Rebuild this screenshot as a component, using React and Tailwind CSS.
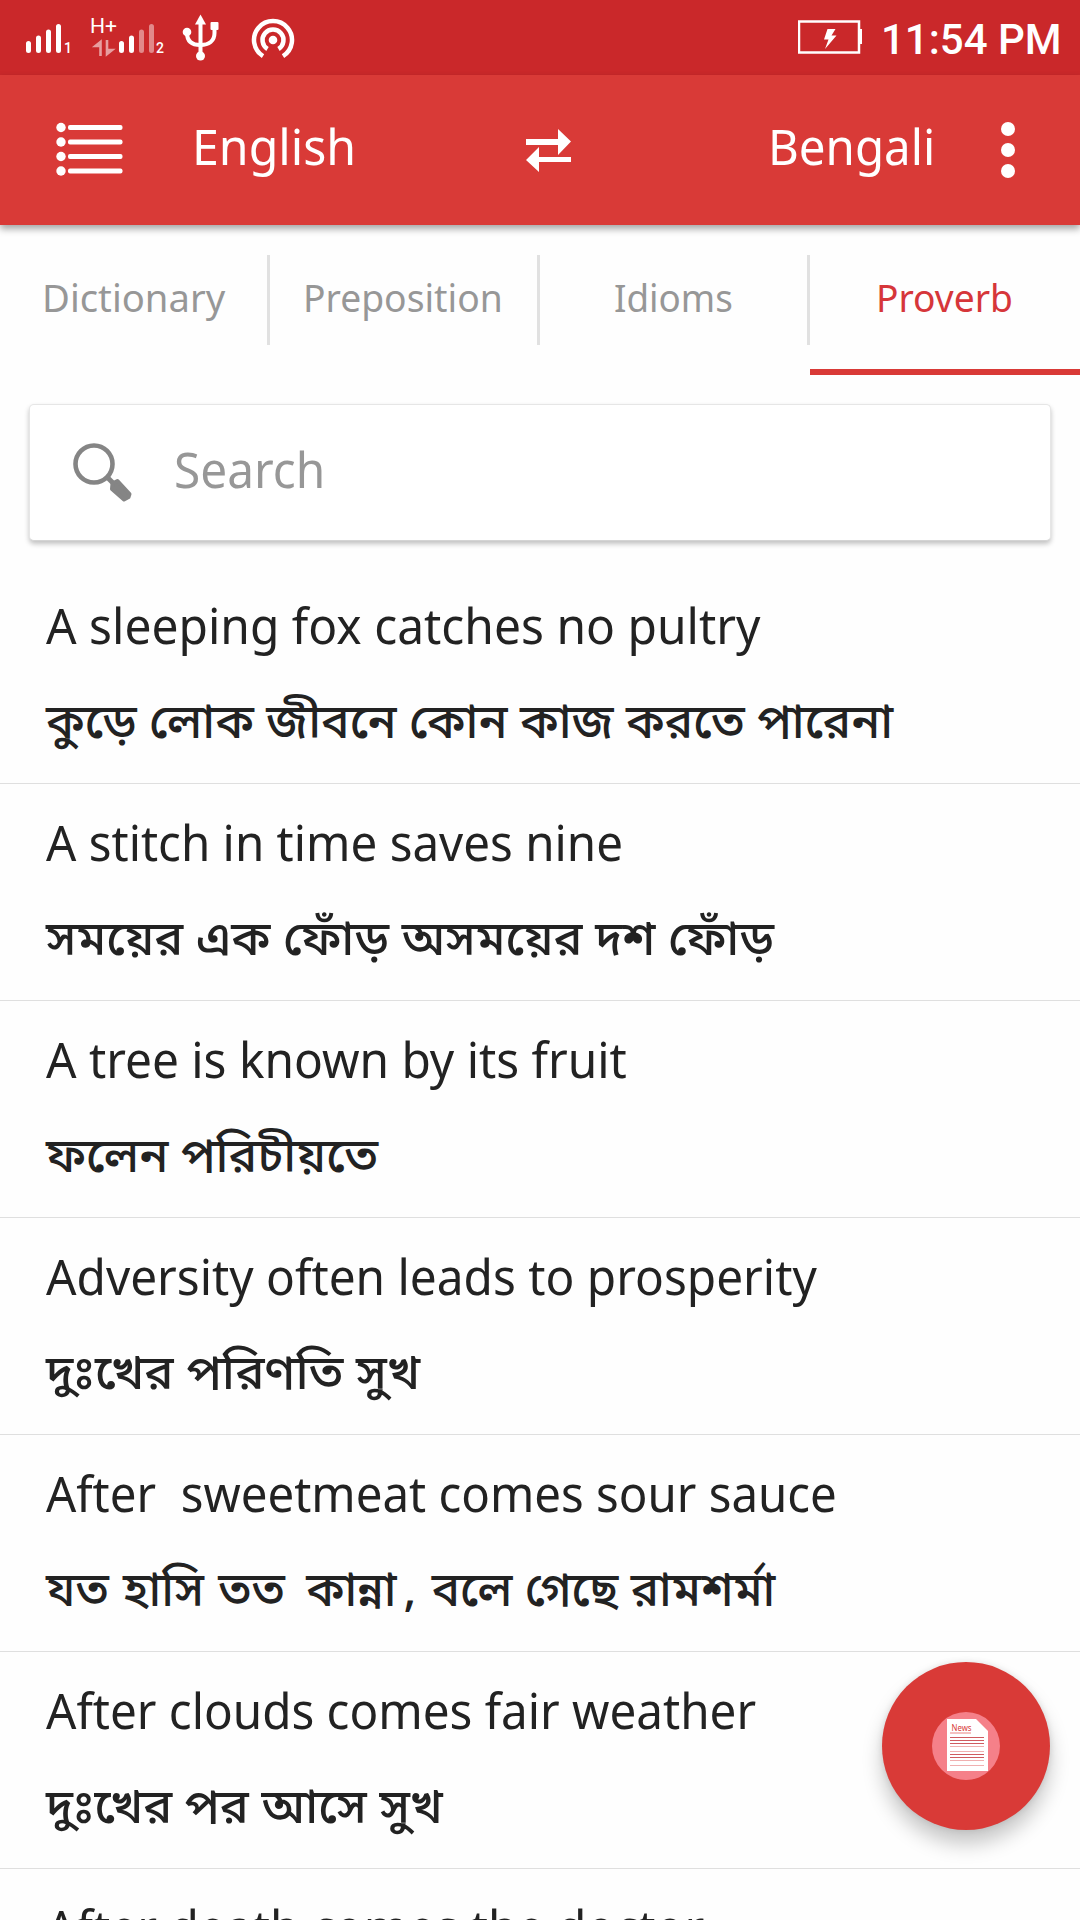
import { useLayoutEffect, useRef, useState } from "react";

// Single line of text condensed or widened to occupy an exact width.
function FitText({ width, className = "", children }) {
  const ref = useRef(null);
  const [scale, setScale] = useState(1);
  useLayoutEffect(() => {
    const fit = () => {
      if (ref.current && ref.current.offsetWidth) setScale(width / ref.current.offsetWidth);
    };
    fit();
    document.fonts?.ready.then(fit);
  }, [width]);
  return (
    <div className={`whitespace-pre ${className}`} style={{ width }}>
      <span ref={ref} className="inline-block origin-left" style={{ transform: `scaleX(${scale})` }}>
        {children}
      </span>
    </div>
  );
}

const proverbs = [
  { en: "A sleeping fox catches no pultry", enW: 714, bn: "কুড়ে লোক জীবনে কোন কাজ করতে পারেনা", bnW: 847 },
  { en: "A stitch in time saves nine", enW: 577, bn: "সময়ের এক ফোঁড় অসময়ের দশ ফোঁড়", bnW: 728 },
  { en: "A tree is known by its fruit", enW: 581, bn: "ফলেন পরিচীয়তে", bnW: 332 },
  { en: "Adversity often leads to prosperity", enW: 771, bn: "দুঃখের পরিণতি সুখ", bnW: 374 },
  {
    en: "After  sweetmeat comes sour sauce",
    enW: 791,
    bn: (
      <>
        যত <span className="ml-[2px]">হাসি</span> <span className="ml-[2px]">তত</span>{" "}
        <span className="ml-[9px]">কান্না</span>
        <span className="mr-[3px] ml-[7px]">,</span> বলে গেছে রামশর্মা
      </>
    ),
    bnW: 729,
  },
  { en: "After clouds comes fair weather", enW: 710, bn: "দুঃখের পর আসে সুখ", bnW: 397 },
  { en: "After death comes the doctor", enW: 658, bn: "", bnW: 0 },
];

const tabs = [
  { label: "Dictionary", w: 183, pad: "pl-[42px]" },
  { label: "Preposition", w: 200, pad: "pl-[33px]" },
  { label: "Idioms", w: 119, pad: "pl-[74px]" },
  { label: "Proverb", w: 137, pad: "pl-[66px]", active: true },
];

function StatusBar() {
  return (
    <div className="flex h-[75px] items-center justify-between bg-[#ca282a] text-white">
      <svg width="320" height="75" viewBox="0 0 320 75" fill="none" stroke="white">
        <g strokeWidth="5" strokeLinecap="round">
          <path d="M28.5 43.500v7M38.500 38v12.500M48.500 32v18.500M58.500 26.500v24" />
          <path d="M121.500 43.500v7M131.500 38v12.500" />
          <path d="M141.500 32v18.500M151.500 26.500v24" strokeOpacity=".45" />
        </g>
        <text x="64" y="53" fontSize="14" fontFamily="Roboto" fontWeight="500" fill="white" stroke="none">1</text>
        <text x="156" y="53" fontSize="14" fontFamily="Roboto" fontWeight="500" fill="white" stroke="none">2</text>
        <text x="90" y="33" fontSize="20" fontFamily="Roboto" textLength="27" lengthAdjust="spacingAndGlyphs" fill="white" stroke="none">H+</text>
        <path d="M100.500 56V42l-5 4h5M107 40v14l5-4h-5" strokeWidth="2.600" strokeOpacity=".55" />
        <g strokeWidth="4">
          <path d="M200.500 20v35" />
          <path d="M187 33c0 8 5 12 13.500 12S214.500 41 214.500 33V26" />
        </g>
        <g fill="white" stroke="none">
          <path d="M200.500 14.500l5.500 10h-11z" />
          <circle cx="187" cy="32" r="4.300" />
          <rect x="210.500" y="22" width="8" height="8" rx="1" />
          <circle cx="200.500" cy="56" r="4.500" />
          <circle cx="273" cy="40" r="4.300" />
        </g>
        <path d="M263 56.200A19 19 0 1 1 283 56.200" strokeWidth="4.500" />
        <path d="M267.500 49A10.500 10.500 0 1 1 278.500 49" strokeWidth="4.500" />
      </svg>
      <div className="flex items-center pr-[18px]">
        <svg className="mr-[18px]" width="65" height="35" viewBox="0 0 65 35" fill="white">
          <rect x="1" y="1.500" width="60" height="31" fill="none" stroke="white" strokeWidth="2.500" />
          <path d="M61 9h3v15h-3z" />
          <path d="M29.500 9h8l-4 6.500h5L27 29l3.500-9.500H26z" />
        </svg>
        <FitText width={181} className="pt-[4px] font-['Roboto'] text-[42px] leading-[60px] font-medium">
          11:54 PM
        </FitText>
      </div>
    </div>
  );
}

function AppBar() {
  return (
    <header className="relative z-10 flex h-[150px] items-center bg-[#d93a37] text-white shadow-[0_4px_7px_rgba(0,0,0,0.35)]">
      <svg className="ml-[56px]" width="68" height="56" viewBox="0 0 68 56" fill="white">
        {[5.5, 20, 34.5, 49].map((y) => (
          <g key={y}>
            <circle cx="5" cy={y} r="4.700" />
            <rect x="12" y={y - 2.5} width="54.500" height="5" rx="2" />
          </g>
        ))}
      </svg>
      <FitText width={164} className="-mt-[8px] ml-[68px] text-[50px] leading-[60px]">English</FitText>
      <svg className="ml-[170px]" width="46" height="43" viewBox="0 0 46 43" fill="white">
        <path d="M0 10h32V0l13 12.500L32 26V16H0zM45 33H13v10L0 31l13-13v10h32z" />
      </svg>
      <FitText width={167} className="-mt-[8px] ml-[196px] text-[50px] leading-[60px]">Bengali</FitText>
      <div className="ml-[66px] flex flex-col gap-[7px]">
        <i className="size-[14px] rounded-full bg-white" />
        <i className="size-[14px] rounded-full bg-white" />
        <i className="size-[14px] rounded-full bg-white" />
      </div>
    </header>
  );
}

function Tabs() {
  return (
    <nav className="grid h-[150px] grid-cols-4">
      {tabs.map((t) => (
        <div
          key={t.label}
          className={`flex h-full items-start ${t.pad} ${t.active ? "border-b-[6px] border-[#d93a37] text-[#d6363a]" : "text-[#979797]"}`}
        >
          <FitText width={t.w} className="mt-[42px] text-[38px] leading-[60px]">{t.label}</FitText>
          {!t.active && <span className="mt-[30px] ml-auto h-[90px] w-[3px] bg-[#e1e1e1]" />}
        </div>
      ))}
    </nav>
  );
}

export default function App() {
  return (
    <div className="relative h-[1920px] w-[1080px] overflow-hidden bg-[#fefefe] font-['Noto_Sans','Noto_Sans_Bengali',sans-serif] text-[#222]">
      <StatusBar />
      <AppBar />
      <Tabs />
      <div className="mx-[29px] mt-[29px] flex h-[137px] items-center rounded-[5px] border border-[#e6e6e6] border-b-[#d4d4d4] bg-white shadow-[0_3px_5px_rgba(0,0,0,0.24)]">
        <svg className="ml-[43px]" width="60" height="60" viewBox="0 0 60 60" fill="none">
          <circle cx="21" cy="21" r="18.500" stroke="#858585" strokeWidth="4.600" />
          <path d="M34 34l7 7" stroke="#858585" strokeWidth="5" />
          <path d="M39.500 40.500l5-2.500 12 13-1 3-4.500 2.500L39 46z" fill="#858585" stroke="#858585" strokeWidth="4" strokeLinejoin="round" />
        </svg>
        <FitText width={151} className="-mt-[7px] ml-[41px] text-[50px] leading-[60px] text-[#979797]">Search</FitText>
      </div>
      <ul className="mt-[26px]">
        {proverbs.map((p) => (
          <li key={p.en} className="h-[217px] border-b border-[#dfdfdf] pt-[28px] pl-[46px]">
            <FitText width={p.enW} className="h-[60px] text-[50px] leading-[60px]">{p.en}</FitText>
            {p.bn && (
              <FitText width={p.bnW} className="mt-[35px] h-[60px] text-[48px] leading-[60px] font-medium">{p.bn}</FitText>
            )}
          </li>
        ))}
      </ul>
      <button className="absolute top-[1662px] left-[882px] flex size-[168px] items-center justify-center rounded-full bg-[#d93a37] shadow-[0_14px_20px_rgba(0,0,0,0.22),0_0_6px_rgba(0,0,0,0.1)]">
        <svg width="68" height="68" viewBox="0 0 68 68">
          <circle cx="34" cy="34" r="34" fill="#f58089" />
          <path d="M15 7h29l12 12v40H15z" fill="white" />
          <text x="19.500" y="18.500" fontSize="9" fontFamily="Noto Sans" textLength="20" lengthAdjust="spacingAndGlyphs" fill="#d93a37">News</text>
          <path d="M18 21h21" stroke="#e98482" />
          <path d="M18 25.500h34M18 28.500h34M18 31.500h34M18 42.500h34M18 45.500h34" stroke="#cf5b60" />
          <path d="M18 34.500h34M18 39.500h34M18 48.500h34M18 53.500h34" stroke="#f0b0b0" />
        </svg>
      </button>
    </div>
  );
}
